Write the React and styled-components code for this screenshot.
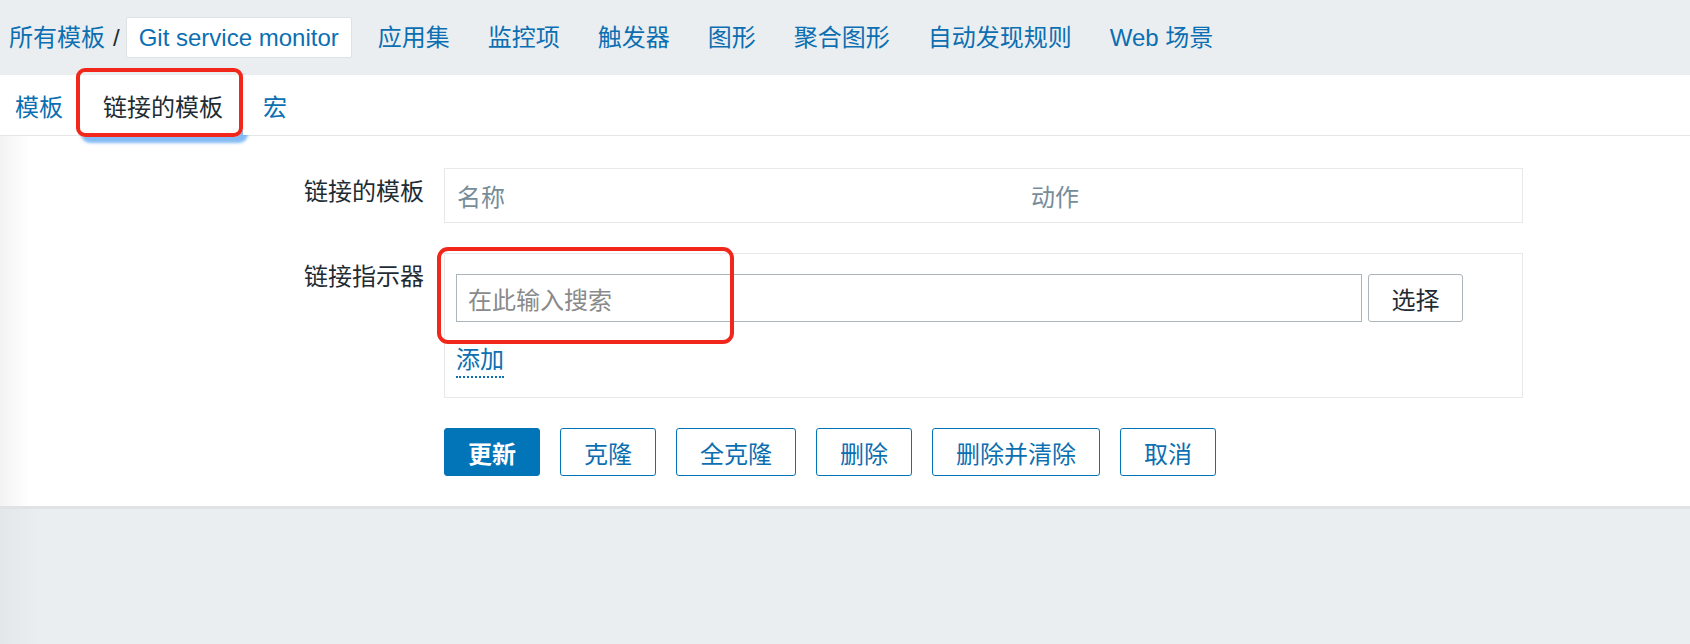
import React from "react";
import styled, { createGlobalStyle } from "styled-components";

const GlobalStyle = createGlobalStyle`
  html, body {
    margin: 0;
    padding: 0;
    background: #ebeef1;
    font-family: "Liberation Sans", "Noto Sans CJK SC", sans-serif;
    font-size: 24px;
    color: #1f2c33;
  }
`;

const Page = styled.div`
  min-height: 644px;
  display: flex;
  flex-direction: column;
  background: #ebeef1;
`;

const TopBar = styled.nav`
  height: 75px;
  display: flex;
  align-items: center;
  padding-left: 9px;
  background: #ebeef1;
`;

const Crumb = styled.a`
  color: #0b6fb2;
  text-decoration: none;
  line-height: 28px;
`;

const Slash = styled.span`
  margin: 0 6px 0 8px;
  color: #1f2c33;
`;

const CurrentCrumb = styled.span`
  box-sizing: border-box;
  height: 41px;
  display: flex;
  align-items: center;
  padding: 0 12px;
  background: #fff;
  border: 1px solid #dde2e5;
  border-radius: 2px;
  color: #0b6fb2;
`;

const NavItem = styled.a`
  margin-left: ${(p) => (p.$first ? "26px" : "38px")};
  color: #0b6fb2;
  text-decoration: none;
  line-height: 28px;
`;

const TabRow = styled.div`
  box-sizing: border-box;
  height: 61px;
  display: flex;
  background: #fff;
  border-bottom: 1px solid #e4e7ea;
`;

const Tab = styled.a`
  position: relative;
  display: flex;
  align-items: center;
  padding: 0 20px;
  color: ${(p) => (p.$active ? "#1f2c33" : "#0b6fb2")};
  background: #fff;
  text-decoration: none;
  &:first-child {
    padding-left: 15px;
  }
`;

const Mark = styled.span`
  position: absolute;
  box-sizing: border-box;
  border: 4px solid #f2271c;
  border-radius: ${(p) => p.$radius || 9}px;
  pointer-events: none;
`;

const TabMark = styled(Mark)`
  left: -7px;
  right: 0;
  top: -7px;
  bottom: -2px;
  box-shadow: 5px 6px 3px rgba(110, 175, 245, 0.85);
`;

const Content = styled.main`
  padding: 32px 0 30px;
  background: linear-gradient(to right, #f3f3f3 0, #fff 30px);
  border-bottom: 3px solid #e0e3e6;
`;

const Form = styled.div`
  display: grid;
  grid-template-columns: 424px 1079px;
  column-gap: 20px;
  row-gap: 30px;
`;

const Label = styled.div`
  text-align: right;
  padding-top: 10px;
  line-height: 28px;
  color: #1f2c33;
`;

const TableBox = styled.div`
  box-sizing: border-box;
  height: 55px;
  display: grid;
  grid-template-columns: 574px 1fr;
  align-items: center;
  padding: 0 12px;
  border: 1px solid #e6e9ec;
`;

const HeadCell = styled.div`
  color: #768d99;
`;

const FieldBox = styled.div`
  position: relative;
  box-sizing: border-box;
  padding: 20px 11px 19px;
  border: 1px solid #e6e9ec;
`;

const InputMark = styled(Mark)`
  left: -8px;
  top: -7px;
  width: 297px;
  height: 97px;
`;

const InputRow = styled.div`
  display: flex;
  gap: 6px;
`;

const SearchInput = styled.div`
  box-sizing: border-box;
  width: 906px;
  height: 48px;
  display: flex;
  align-items: center;
  padding: 0 11px;
  border: 1px solid #acb5ba;
  color: #8a8a8a;
  background: #fff;
`;

const SelectButton = styled.button`
  box-sizing: border-box;
  width: 95px;
  height: 48px;
  font: inherit;
  color: #1f2c33;
  background: #fff;
  border: 1px solid #acb5ba;
  border-radius: 3px;
`;

const AddLink = styled.a`
  display: inline-block;
  margin-top: 24px;
  line-height: 28px;
  padding-bottom: 2px;
  color: #0b6fb2;
  border-bottom: 2px dotted #0b6fb2;
  text-decoration: none;
`;

const Buttons = styled.div`
  grid-column: 2;
  display: flex;
  gap: 20px;
`;

const Button = styled.button`
  box-sizing: border-box;
  height: 48px;
  padding: 0 23px;
  font: inherit;
  border: 1px solid #0275b8;
  border-radius: 3px;
  color: ${(p) => (p.$primary ? "#fff" : "#0b6fb2")};
  background: ${(p) => (p.$primary ? "#0275b8" : "#fff")};
  font-weight: ${(p) => (p.$primary ? 700 : 400)};
`;

const Footer = styled.div`
  flex: 1;
  background: linear-gradient(to right, #e3e7ea 0, #ebeef1 40px);
`;

const navItems = ["应用集", "监控项", "触发器", "图形", "聚合图形", "自动发现规则", "Web 场景"];
const tabs = ["模板", "链接的模板", "宏"];
const actions = ["更新", "克隆", "全克隆", "删除", "删除并清除", "取消"];

export default function App() {
  return (
    <Page>
      <GlobalStyle />
      <TopBar>
        <Crumb>所有模板</Crumb>
        <Slash>/</Slash>
        <CurrentCrumb>Git service monitor</CurrentCrumb>
        {navItems.map((item, i) => (
          <NavItem key={item} $first={i === 0}>
            {item}
          </NavItem>
        ))}
      </TopBar>
      <TabRow>
        {tabs.map((tab) => (
          <Tab key={tab} $active={tab === "链接的模板"}>
            {tab}
            {tab === "链接的模板" && <TabMark />}
          </Tab>
        ))}
      </TabRow>
      <Content>
        <Form>
          <Label>链接的模板</Label>
          <TableBox>
            <HeadCell>名称</HeadCell>
            <HeadCell>动作</HeadCell>
          </TableBox>
          <Label>链接指示器</Label>
          <FieldBox>
            <InputRow>
              <SearchInput>在此输入搜索</SearchInput>
              <SelectButton>选择</SelectButton>
            </InputRow>
            <AddLink>添加</AddLink>
            <InputMark $radius={11} />
          </FieldBox>
          <Buttons>
            {actions.map((a, i) => (
              <Button key={a} $primary={i === 0}>
                {a}
              </Button>
            ))}
          </Buttons>
        </Form>
      </Content>
      <Footer />
    </Page>
  );
}
